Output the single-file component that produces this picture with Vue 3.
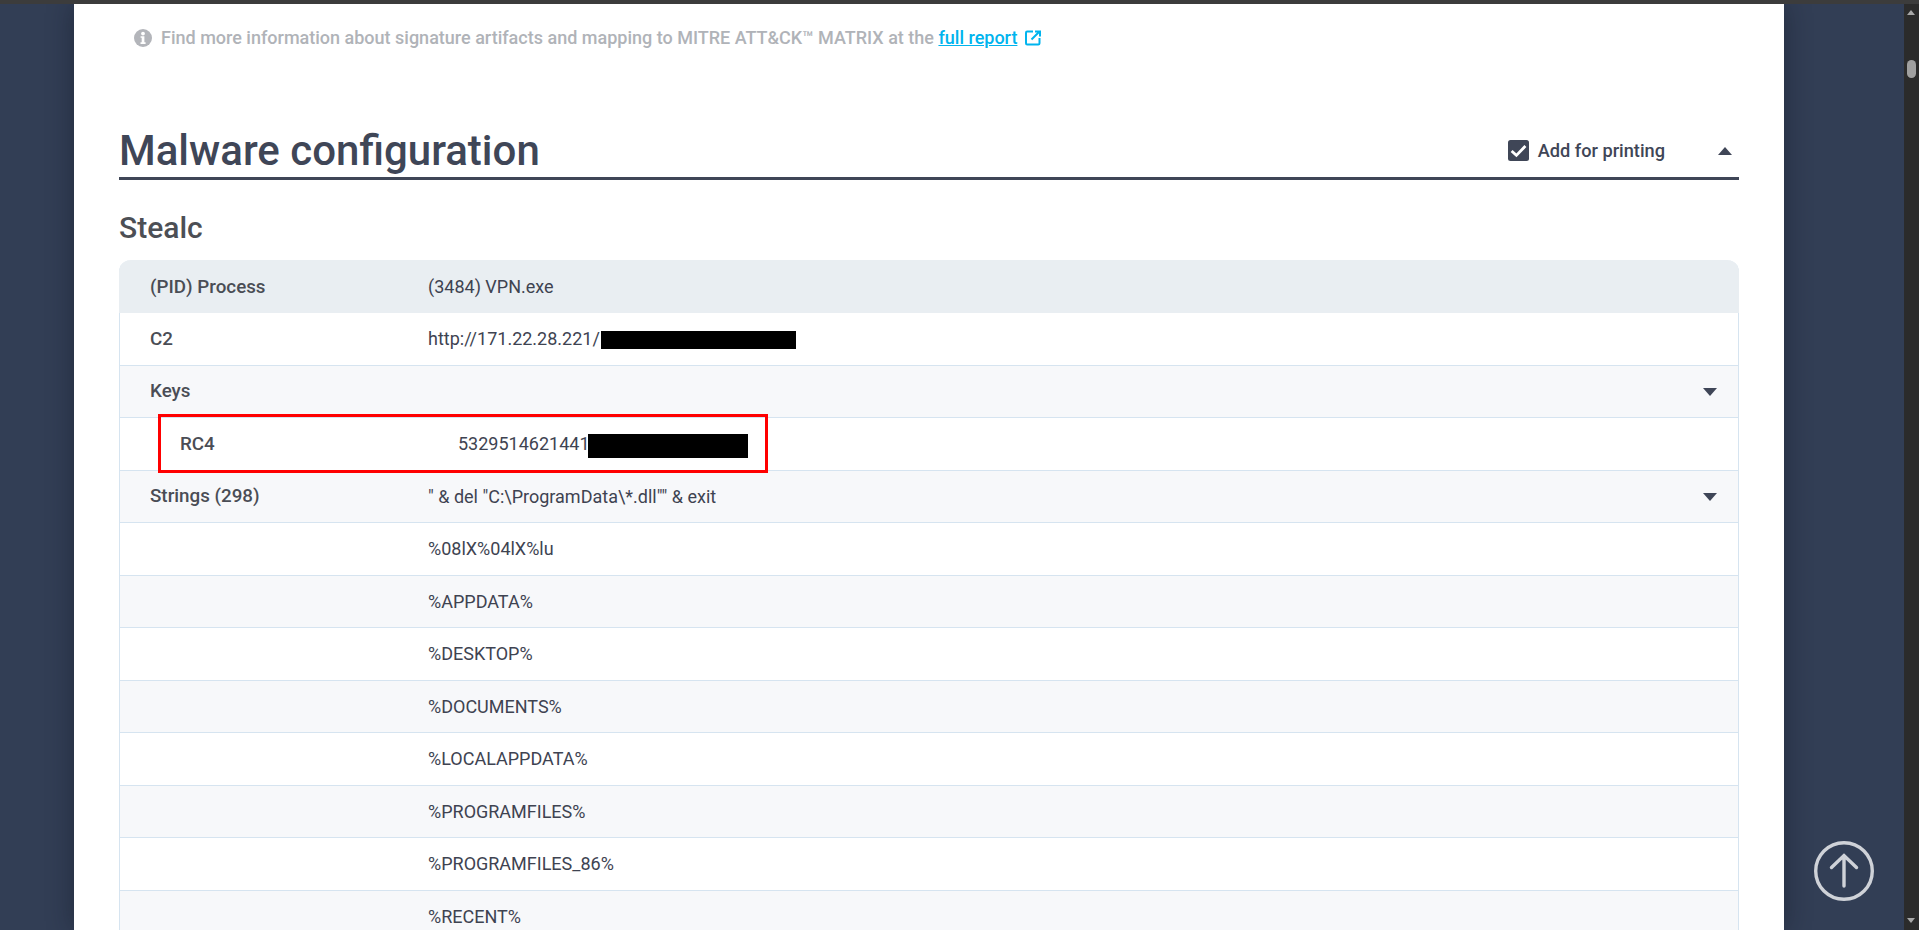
<script setup>
const strings = [
  '%08lX%04lX%lu',
  '%APPDATA%',
  '%DESKTOP%',
  '%DOCUMENTS%',
  '%LOCALAPPDATA%',
  '%PROGRAMFILES%',
  '%PROGRAMFILES_86%',
  '%RECENT%'
]
</script>

<template>
  <div class="viewport">
    <div class="chrome-top"></div>
    <div class="stage">
      <main class="paper">
        <p class="note">
          <svg class="info" viewBox="0 0 18 18" width="18" height="18">
            <circle cx="9" cy="9" r="9" fill="#b3b5ba" />
            <circle cx="9" cy="4.6" r="1.9" fill="#fff" />
            <path d="M6.6 7.2h3.8v6.1h1.2v1.6H6.5v-1.6h1.2V8.8H6.6z" fill="#fff" />
          </svg>
          <span class="note-text">Find more information about signature artifacts and mapping to MITRE ATT&amp;CK™ MATRIX at the <a class="link">full report</a></span>
          <svg class="ext" viewBox="0 0 16 16" width="16" height="16" fill="none" stroke="#00b4ee" stroke-width="2">
            <path d="M8 1.5H2.2a1.2 1.2 0 0 0-1.2 1.2v10.6a1.2 1.2 0 0 0 1.2 1.2h11.1a1.2 1.2 0 0 0 1.2-1.2V8" />
            <path d="M6.5 9.5 14 2M10 1.5h5v5" />
          </svg>
        </p>

        <header class="section-head">
          <h1>Malware configuration</h1>
          <div class="tools">
            <span class="check">
              <svg viewBox="0 0 21 21" width="21" height="21">
                <rect width="21" height="21" rx="2.5" fill="#3f4657" />
                <path d="M3.6 11 8.4 15.4 17.4 6" fill="none" stroke="#fff" stroke-width="2.8" />
              </svg>
              Add for printing
            </span>
            <i class="tri up"></i>
          </div>
        </header>

        <h2>Stealc</h2>

        <div class="table">
          <div class="row head"><span class="k">(PID) Process</span><span class="v">(3484) VPN.exe</span></div>
          <div class="row"><span class="k">C2</span><span class="v">http://171.22.28.221/<b class="mask url"></b></span></div>
          <div class="row alt"><span class="k">Keys</span><span class="v"></span><i class="tri down"></i></div>
          <div class="row sub"><span class="k">RC4</span><span class="v">5329514621441<b class="mask key"></b></span><div class="callout"></div></div>
          <div class="row alt"><span class="k">Strings (298)</span><span class="v">" &amp; del "C:\ProgramData\*.dll"" &amp; exit</span><i class="tri down"></i></div>
          <div v-for="(s, i) in strings" :key="s" class="row" :class="{ alt: i % 2 === 1 }"><span class="k"></span><span class="v">{{ s }}</span></div>
        </div>
      </main>

      <button class="to-top" aria-label="Back to top">
        <svg viewBox="0 0 60 60" width="60" height="60" fill="none" stroke="#cfd2d8" stroke-width="3.4" stroke-linecap="round">
          <circle cx="30" cy="30" r="28.3" />
          <path d="M30 14.5V45M17.5 26.5 30 14.5 42.5 26.5" />
        </svg>
      </button>
    </div>
    <aside class="scrollbar">
      <i class="sb-up"></i>
      <i class="sb-thumb"></i>
      <i class="sb-down"></i>
    </aside>
  </div>
</template>

<style>
html, body { margin: 0; height: 100%; overflow: hidden; }
</style>

<style scoped>
.viewport {
  position: relative;
  height: 930px;
  overflow: hidden;
  font-family: Roboto, "Liberation Sans", sans-serif;
  background: #323e55;
  display: flex;
  flex-direction: column;
}
.chrome-top { height: 4px; background: #3c3c3c; flex: none; position: relative; z-index: 3; }
.stage { flex: 1; width: 1904px; position: relative; min-height: 0; }
.paper {
  width: 1710px;
  height: 100%;
  margin-left: 74px;
  box-sizing: border-box;
  padding: 0 45px;
  background: #fff;
  box-shadow: 0 0 25px rgba(15, 20, 30, .45);
  overflow: hidden;
}
.note {
  margin: 0;
  padding: 24px 0 0 15px;
  display: flex;
  align-items: center;
  height: 20px;
  font-size: 18px;
  font-weight: 500;
  color: #b0b3b8;
  line-height: 20px;
}
.info { margin-right: 9px; flex: none; }
.link { color: #00b4ee; text-decoration: underline; }
.ext { margin-left: 8px; flex: none; }
.section-head {
  margin-top: 59px;
  height: 70px;
  box-sizing: content-box;
  border-bottom: 3px solid #3f4657;
  display: flex;
  justify-content: space-between;
  align-items: flex-end;
}
h1 {
  margin: 0;
  font-size: 42px;
  font-weight: 500;
  line-height: 50px;
  padding-bottom: 1px;
  color: #3f4657;
}
.tools { display: flex; align-items: center; padding-bottom: 16px; padding-right: 7px; }
.check { display: flex; align-items: center; gap: 9px; font-size: 18.2px; font-weight: 500; color: #3f4657; margin-right: 53px; }
.tri { display: block; width: 0; height: 0; border-left: 7.5px solid transparent; border-right: 7.5px solid transparent; }
.tri.up { border-bottom: 8px solid #3f4657; }
.tri.down { border-top: 8px solid #3f4657; position: absolute; right: 21px; top: 22.5px; }
h2 {
  margin: 0;
  padding-top: 28px;
  height: 52px;
  font-size: 30px;
  line-height: 40px;
  font-weight: 500;
  color: #4c4f55;
}
.table {
  border: solid #d6e4f0;
  border-width: 0 1px;
  border-radius: 12px 12px 0 0;
  margin-top: 0;
}
.row {
  position: relative;
  height: 52.5px;
  box-sizing: border-box;
  display: flex;
  align-items: center;
  padding-left: 30px;
  border-bottom: 1px solid #d6e4f0;
  background: #fff;
  font-size: 18px;
  color: #3e4351;
}
.row.alt { background: #f7f8fa; }
.row.head { height: 53px; background: #e9eef2; border-bottom: 0; margin: 0 -1px; padding-left: 31px; border-radius: 12px 12px 0 0; }
.k { width: 278px; font-size: 18.8px; font-weight: 500; color: #4a4d55; flex: none; }
.row.sub { padding-left: 60px; z-index: 2; }
.mask { display: inline-block; background: #000; }
.mask.url { width: 195px; height: 18px; margin: -4px 0 -4px 1.5px; vertical-align: baseline; }
.mask.key { width: 160px; height: 24px; margin: -6px 0 -6px -1.5px; vertical-align: -2px; }
.callout {
  position: absolute;
  left: 37.5px;
  top: -4px;
  width: 610px;
  height: 59px;
  box-sizing: border-box;
  border: 3px solid #f00;
  pointer-events: none;
}
.to-top {
  position: absolute;
  left: 1814px;
  top: 837px;
  padding: 0;
  border: 0;
  background: none;
  line-height: 0;
}
.scrollbar {
  position: absolute;
  top: 4px;
  right: 0;
  bottom: 0;
  width: 15px;
  background: #2b2b2b;
}
.sb-up, .sb-down { position: absolute; left: 3px; width: 0; height: 0; border-left: 4.5px solid transparent; border-right: 4.5px solid transparent; }
.sb-up { top: 6px; border-bottom: 5px solid #a8a8a8; }
.sb-down { bottom: 7px; border-top: 5px solid #a8a8a8; }
.sb-thumb { position: absolute; left: 3px; top: 56px; width: 9px; height: 18px; border-radius: 4.5px; background: #a0a0a0; }
</style>
